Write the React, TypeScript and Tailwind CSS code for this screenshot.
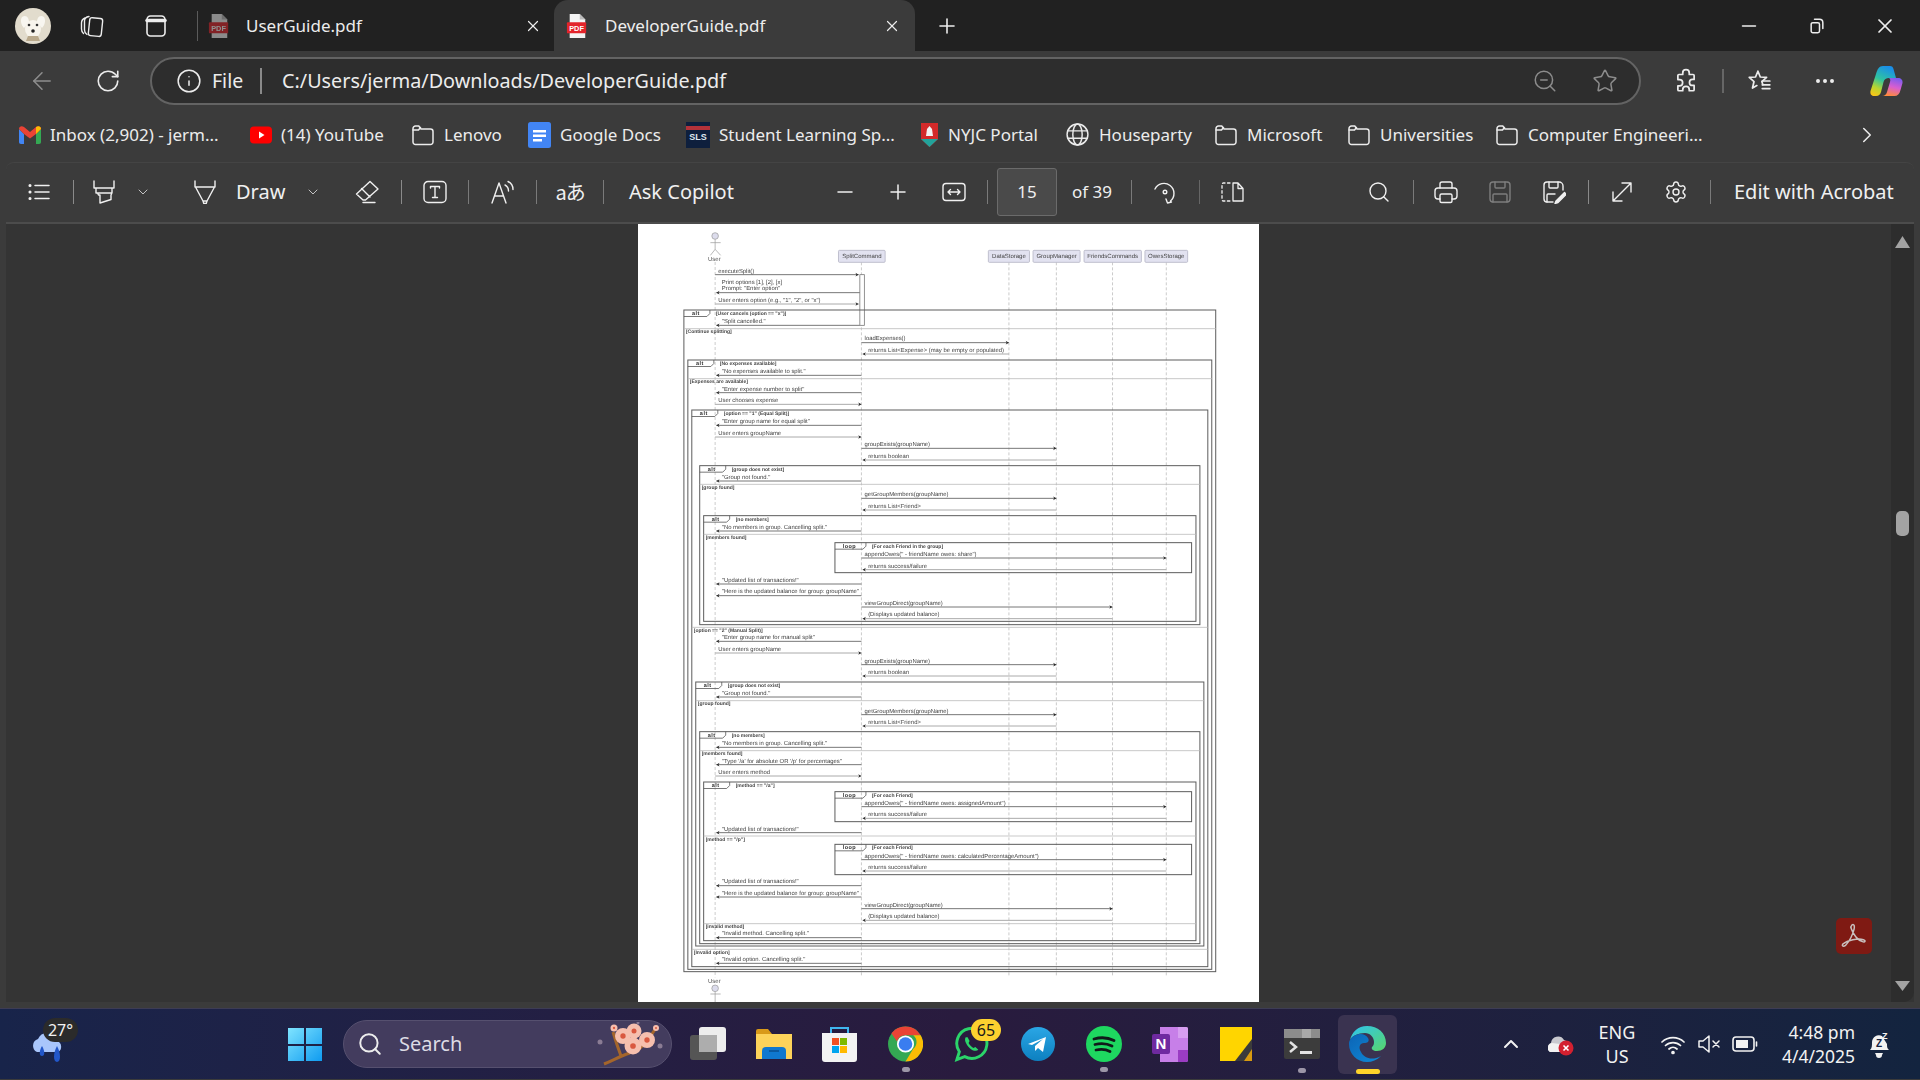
import React from "react";
import { Search, Settings, Plus, Minus, X, ChevronRight, ChevronDown, ChevronUp, Info, RotateCw, ArrowLeft, Star, ZoomOut, Ellipsis } from "lucide-react";

const S = ({ children, className = "", vb = "0 0 24 24", sw = 1.5 }: { children: React.ReactNode; className?: string; vb?: string; sw?: number }) => (
  <svg viewBox={vb} fill="none" stroke="currentColor" strokeWidth={sw} strokeLinecap="round" strokeLinejoin="round" className={"shrink-0 " + className}>{children}</svg>
);
const Div = ({ className = "" }: { className?: string }) => <div className={"w-px h-[24px] bg-[#7a7a7a] shrink-0 " + className} />;

const Folder = ({ className = "" }: { className?: string }) => (
  <S className={"w-[24px] h-[24px] text-[#ececec] " + className}><path d="M2 5.5A2.5 2.5 0 0 1 4.5 3h3.3l2.2 3h9.5A2.5 2.5 0 0 1 22 8.500V19a2.500 2.500 0 0 1-2.500 2.500h-15A2.500 2.500 0 0 1 2 19Z" /><path d="M2 7h5.500l2-2.500" /></S>
);
const PdfIcon = ({ dim = false, className = "" }: { dim?: boolean; className?: string }) => (
  <svg viewBox="0 0 24 26" className={"w-[22px] h-[24px] shrink-0 " + (dim ? "opacity-50 " : "") + className}>
    <path d="M4 0h11l6 6v20H4Z" fill="#f4f4f4" /><path d="M15 0v6h6Z" fill="#bbb" />
    <rect x="1" y="9" width="21" height="12" rx="1" fill="#e3242b" />
    <text x="11.500" y="18.500" textAnchor="middle" fill="#fff" fontSize="8" fontWeight="700" fontFamily="'Liberation Sans',sans-serif">PDF</text>
  </svg>
);
const Copilot = () => (
  <svg viewBox="0 0 33 30" className="w-[33px] h-[30px] ml-[33px] mt-[9px] shrink-0">
    <defs>
      <linearGradient id="cpa" x1="0.6" y1="0" x2="0.2" y2="1"><stop offset="0" stopColor="#1a8fe8" /><stop offset=".45" stopColor="#2fc4a0" /><stop offset=".75" stopColor="#b8d430" /><stop offset="1" stopColor="#f7c518" /></linearGradient>
      <linearGradient id="cpb" x1="0.7" y1="0" x2="0.4" y2="1"><stop offset="0" stopColor="#7a5cf0" /><stop offset=".5" stopColor="#d85ed0" /><stop offset="1" stopColor="#ff8a3d" /></linearGradient>
    </defs>
    <path d="M19 12h9c3 0 5 2 4.500 5l-2 7c-1 4-3 6-6 6H12c3 0 4.500-2 5-4l3-10c.5-2 .5-3-1-4Z" fill="url(#cpb)" />
    <path d="M13 0h7c2 0 3 1 3.500 3L26 12h-7c-3 0-4.500 1-5.500 4L11 26c-.5 2-2 4-5 4H4c-3 0-4-2.500-3.500-5L6 8C7.500 3 9 0 13 0Z" fill="url(#cpa)" />
  </svg>
);

const TabBar = () => (
  <div className="flex items-center h-[51px] bg-[#212121] text-[#ededed] shrink-0">
    <svg viewBox="0 0 36 36" className="w-[36px] h-[36px] ml-[15px] shrink-0">
      <circle cx="18" cy="18" r="18" fill="#e2dccd" /><path d="M7 9c5-3 7 2 7 5l-5 6c-3-3-4-8-2-11ZM29 9c-5-3-7 2-7 5l5 6c3-3 4-8 2-11Z" fill="#f8f6f0" />
      <ellipse cx="18" cy="21" rx="8" ry="9" fill="#f7f4ec" /><circle cx="14" cy="17" r="1.300" fill="#333" /><circle cx="22" cy="17" r="1.300" fill="#333" /><circle cx="18" cy="23" r="1.800" fill="#222" /><path d="M11 33h14l-2-5H13Z" fill="#b9a98c" />
    </svg>
    <S className="w-[24px] h-[24px] ml-[29px]" sw={1.4}><rect x="9" y="4" width="13" height="18" rx="2.500" transform="rotate(6 15 13)" /><path d="M9 2.500 C5.500 3 4.500 4.500 4.500 7v9c0 2 .8 3.500 2.500 4.500" /><path d="M5 4C2.500 5 1.500 6.500 1.500 9v6c0 2 .8 3.500 2 4.500" /></S>
    <S className="w-[24px] h-[24px] ml-[40px]" sw={1.6}><rect x="3" y="2" width="18" height="20" rx="3.500" /><path d="M3 6.500h18" strokeWidth="3.500" /></S>
    <div className="w-px h-[30px] bg-[#5b5b5b] ml-[29px]" />
    <div className="flex items-center w-[356px] h-[51px] pl-[10px] shrink-0">
      <PdfIcon dim />
      <span className="ml-[16px] text-[17px] text-[#ececec] w-[278px]">UserGuide.pdf</span>
      <X className="w-[18px] h-[18px]" strokeWidth={1.6} />
    </div>
    <div className="flex items-center w-[361px] h-[51px] bg-[#3b3b3b] rounded-t-[14px] pl-[12px] shrink-0">
      <PdfIcon />
      <span className="ml-[17px] text-[17px] w-[278px]">DeveloperGuide.pdf</span>
      <X className="w-[18px] h-[18px]" strokeWidth={1.6} />
    </div>
    <Plus className="w-[24px] h-[24px] ml-[20px]" strokeWidth={1.6} />
    <Minus className="w-[22px] h-[22px] ml-auto" strokeWidth={1.8} />
    <S className="w-[20px] h-[20px] ml-[47px]" sw={1.8}><rect x="5" y="8" width="10" height="12" rx="2" /><path d="M9 4h6a4 4 0 0 1 4 4v7" /></S>
    <X className="w-[24px] h-[24px] ml-[46px] mr-[23px]" strokeWidth={1.7} />
  </div>
);

const AddressBar = () => (
  <div className="flex items-start h-[64px] pt-[6px] bg-[#3b3b3b] text-[#ececec] shrink-0">
    <ArrowLeft className="w-[28px] h-[28px] ml-[28px] mt-[10px] text-[#8e8e8e]" strokeWidth={1.3} />
    <RotateCw className="w-[26px] h-[26px] ml-[39px] mt-[11px]" strokeWidth={1.5} />
    <div className="flex items-center w-[1491px] h-[48px] ml-[29px] rounded-full bg-[#2d2d2d] border-2 border-[#636363] shrink-0">
      <Info className="w-[26px] h-[26px] ml-[24px]" strokeWidth={1.4} />
      <span className="ml-[10px] text-[19.500px] w-[42px]">File</span>
      <div className="w-[2px] h-[26px] bg-[#8a8a8a] ml-[6px]" />
      <span className="ml-[20px] text-[19.800px] whitespace-nowrap w-[460px]">C:/Users/jerma/Downloads/DeveloperGuide.pdf</span>
      <ZoomOut className="w-[26px] h-[26px] ml-[790px] text-[#8c8c8c]" strokeWidth={1.4} />
      <Star className="w-[26px] h-[26px] ml-[34px] text-[#8c8c8c]" strokeWidth={1.4} />
    </div>
    <S className="w-[26px] h-[26px] ml-[32px] mt-[11px]" sw={1.6}><path d="M9 4.500a3 3 0 0 1 6 0V6h3.500a1 1 0 0 1 1 1v3.500H18a2.800 2.800 0 0 0 0 5.600h1.500V20a1 1 0 0 1-1 1h-3.500v-1a3 3 0 0 0-6 0v1H5.500a1 1 0 0 1-1-1v-3.500H6a2.900 2.900 0 0 0 0-5.800H4.500V7a1 1 0 0 1 1-1H9Z" /></S>
    <div className="w-[2px] h-[24px] bg-[#666] ml-[23px] mt-[12px]" />
    <S className="w-[26px] h-[26px] ml-[22px] mt-[11px]" sw={1.6}><path d="M11 3l2.200 5.300 5.800.4-4.400 3.800 1 3M11 3 8.800 8.300 3 8.700l4.400 3.800L6 18.500l4-2.300" /><path d="M15 12h7M15 15.500h7M15 19h7" /></S>
    <Ellipsis className="w-[24px] h-[24px] ml-[41px] mt-[12px]" strokeWidth={2} />
    <Copilot />
  </div>
);

const GIcon = () => (
  <svg viewBox="0 0 22 18" className="w-[22px] h-[18px] shrink-0"><path d="M0 3v13c0 1 .7 2 2 2h3V8Z" fill="#4285f4" /><path d="M22 3v13c0 1-.7 2-2 2h-3V8Z" fill="#34a853" /><path d="M0 3c0-3 3-3.500 5-2l6 5 6-5c2-1.500 5-1 5 2l-5 5-6 4.500L5 8Z" fill="#ea4335" /><path d="M17 1c2-1.500 5-1 5 2l-5 5Z" fill="#fbbc04" /></svg>
);
const Bookmark = ({ icon, text, className }: { icon: React.ReactNode; text: string; className: string }) => (
  <div className={"flex items-center shrink-0 " + className}>
    {icon}
    <span className="whitespace-nowrap text-[17px] text-[#ececec] ml-[9px]">{text}</span>
  </div>
);
const Bookmarks = () => (
  <div className="flex items-center h-[39px] bg-[#3b3b3b] text-[#ececec] shrink-0 mb-[8px]">
    <Bookmark className="ml-[19px] w-[231px]" text="Inbox (2,902) - jerm..." icon={<GIcon />} />
    <Bookmark className="w-[161px]" text="(14) YouTube" icon={<svg viewBox="0 0 22 18" className="w-[22px] h-[18px] shrink-0"><rect width="22" height="17" y=".5" rx="4" fill="#f00" /><path d="M9 5.500v7l5.500-3.500Z" fill="#fff" /></svg>} />
    <Bookmark className="w-[117px]" text="Lenovo" icon={<Folder />} />
    <Bookmark className="w-[158px]" text="Google Docs" icon={<svg viewBox="0 0 23 26" className="w-[23px] h-[26px] shrink-0"><rect width="23" height="26" rx="2.500" fill="#4285f4" /><path d="M5 8h13v2.500H5ZM5 12.500h13V15H5ZM5 17h9v2.500H5Z" fill="#fff" /></svg>} />
    <Bookmark className="w-[234px]" text="Student Learning Sp..." icon={<svg viewBox="0 0 24 26" className="w-[24px] h-[26px] shrink-0"><rect width="24" height="26" fill="#0e1f3d" /><rect y="4" width="24" height="4" fill="#b3323a" /><text x="12" y="18" textAnchor="middle" fontSize="9" fontWeight="700" fill="#dfe6ee" fontFamily="'Liberation Sans',sans-serif">SLS</text></svg>} />
    <Bookmark className="w-[145px]" text="NYJC Portal" icon={<svg viewBox="0 0 19 26" className="w-[19px] h-[26px] shrink-0"><path d="M1 1h17v16l-8.500 8L1 17Z" fill="#d32a2a" /><path d="M6 14l1-7 2.500-3L12 7l1 7Z" fill="#f3f3f3" /><path d="M1 17h17l-8.500 8Z" fill="#22a39b" /></svg>} />
    <Bookmark className="w-[149px]" text="Houseparty" icon={<S className="w-[25px] h-[25px]" sw={1.4}><circle cx="12" cy="12" r="10" /><ellipse cx="12" cy="12" rx="4.500" ry="10" /><path d="M2.500 8.500h19M2.500 15.500h19" /></S>} />
    <Bookmark className="w-[133px]" text="Microsoft" icon={<Folder />} />
    <Bookmark className="w-[148px]" text="Universities" icon={<Folder />} />
    <Bookmark className="w-[220px]" text="Computer Engineeri..." icon={<Folder />} />
    <ChevronRight className="w-[26px] h-[26px] ml-[139px]" strokeWidth={1.4} />
  </div>
);

const Toolbar = () => (
  <div className="flex items-center h-[62px] pb-[2px] mx-[6px] bg-[#3b3b3b] rounded-t-[8px] border-b-2 border-[#4c4c4c] border-t border-t-[#444] text-[#f0f0f0] shrink-0">
    <S className="w-[24px] h-[24px] ml-[21px]" sw={1.5}><path d="M8 5.500h14M8 12h14M8 18.500h14" /><circle cx="3" cy="5.500" r=".8" /><circle cx="3" cy="12" r=".8" /><circle cx="3" cy="18.500" r=".8" /></S>
    <Div className="ml-[22px] bg-[#8a8a8a]" />
    <S className="w-[24px] h-[24px] ml-[18px]" sw={1.4}><path d="M2 1v7h20V1M4 8v5h16V8M5.500 13l1 2h1.500v8l11-3.500V15l1-2" /></S>
    <ChevronDown className="w-[16px] h-[16px] ml-[19px] text-[#cfcfcf]" strokeWidth={1.4} />
    <S className="w-[24px] h-[24px] ml-[42px]" sw={1.4}><path d="M2 1v6h20V1M2.500 7 10 21h4l7.500-14M10 21l.8 2.500h2.400L14 21" /></S>
    <span className="text-[20px] ml-[19px] w-[48px]">Draw</span>
    <ChevronDown className="w-[16px] h-[16px] ml-[21px] text-[#cfcfcf]" strokeWidth={1.4} />
    <S className="w-[24px] h-[24px] ml-[34px]" sw={1.4}><path d="M15 1.500 23 9 10.500 20H8L1.500 14ZM6.500 8.500 15 17M8 22.500h12" /></S>
    <Div className="ml-[22px] bg-[#8a8a8a]" />
    <S className="w-[24px] h-[24px] ml-[21px]" sw={1.4}><rect x="1" y="1.500" width="22" height="21" rx="4" /><path d="M7.500 6.500h9M7.500 6.500v1.500M16.500 6.500v1.500M12 6.500v11M9.500 17.500h5" /></S>
    <Div className="ml-[21px]" />
    <S className="w-[24px] h-[24px] ml-[21px]" sw={1.4}><path d="M2 23 9 3l7 20M4.500 16h9M15 5c2 1 3.500 3 3.500 6M18 1.500c3 1.500 5 4.500 5 8" /></S>
    <Div className="ml-[22px]" />
    <span className="ml-[21px] w-[24px] text-[20px] leading-none whitespace-nowrap font-['Noto_Sans_CJK_JP',sans-serif] flex justify-center tracking-[-1px]">aあ</span>
    <Div className="ml-[21px]" />
    <span className="text-[20px] ml-[25px] w-[106px] whitespace-nowrap">Ask Copilot</span>
    <Minus className="w-[24px] h-[24px] ml-[98px]" strokeWidth={1.5} />
    <Plus className="w-[24px] h-[24px] ml-[29px]" strokeWidth={1.5} />
    <S className="w-[24px] h-[24px] ml-[32px]" sw={1.4}><rect x="1" y="3.500" width="22" height="17" rx="3" /><path d="M6 12h12M8.500 9.500 6 12l2.500 2.500M15.500 9.500 18 12l-2.500 2.500" /></S>
    <Div className="ml-[21px]" />
    <div className="w-[60px] h-[48px] ml-[9px] bg-[#4a4a4a] border border-[#6b6b6b] rounded-[3px] flex items-center justify-center text-[17px] shrink-0">15</div>
    <span className="text-[17px] ml-[15px] w-[41px] whitespace-nowrap">of 39</span>
    <Div className="ml-[18px]" />
    <S className="w-[24px] h-[24px] ml-[21px]" sw={1.4}><path d="M2 9a10 10 0 1 1 15.500 12M13 19l1.500 4 4-1" /><circle cx="12" cy="12" r="1.800" /></S>
    <Div className="ml-[22px] bg-[#666]" />
    <S className="w-[24px] h-[24px] ml-[20px]" sw={1.3}><path d="M10 3H3a1.500 1.500 0 0 0-1 1.500v15A1.500 1.500 0 0 0 3 21h7" strokeDasharray="2.500 2.500" /><path d="M13 3h5l5 5.500V21H13ZM18 3v5.500h5" /></S>
    <Search className="w-[24px] h-[24px] ml-[123px]" strokeWidth={1.4} />
    <Div className="ml-[22px]" />
    <S className="w-[24px] h-[24px] ml-[20px]" sw={1.4}><path d="M6 8V4a2 2 0 0 1 2-2h8a2 2 0 0 1 2 2v4" /><path d="M6 19H4a3 3 0 0 1-3-3v-5a3 3 0 0 1 3-3h16a3 3 0 0 1 3 3v5a3 3 0 0 1-3 3h-2" /><rect x="6" y="14" width="12" height="8.500" rx="1.500" /></S>
    <S className="w-[24px] h-[24px] ml-[30px] text-[#7e7e7e]" sw={1.4}><path d="M5 2h14a3 3 0 0 1 3 3v14a3 3 0 0 1-3 3H5a3 3 0 0 1-3-3V5a3 3 0 0 1 3-3Z" /><path d="M7 2v5a1 1 0 0 0 1 1h8a1 1 0 0 0 1-1V2M5 22v-7a1 1 0 0 1 1-1h12a1 1 0 0 1 1 1v7" /></S>
    <S className="w-[24px] h-[24px] ml-[30px]" sw={1.4}><path d="M11 22H5a3 3 0 0 1-3-3V5a3 3 0 0 1 3-3h12a4 4 0 0 1 4 4v4" /><path d="M7 2v5a1 1 0 0 0 1 1h7a1 1 0 0 0 1-1V2M5 22v-7a1 1 0 0 1 1-1h7" /><path d="M22.500 12.500 14 21l-1 2.500 3-1 8-8Z" fill="currentColor" /></S>
    <Div className="ml-[22px] bg-[#8a8a8a]" />
    <S className="w-[24px] h-[24px] ml-[21px]" sw={1.4}><path d="M3 21 21 3M12 3h9v9M3 12v9h9" /></S>
    <Settings className="w-[24px] h-[24px] ml-[30px]" strokeWidth={1.4} />
    <Div className="ml-[22px]" />
    <span className="text-[20px] ml-[23px] whitespace-nowrap">Edit with Acrobat</span>
  </div>
);

/* sequence diagram data: coordinates are measured, then mapped to page pixels */
const fx = (z: number) => 2 + z / 2.529;
const A = (z: number) => z / 3 - 2;
const B = (z: number) => z / 3 + 286;
const C = (z: number) => z / 3 + 556;
const U = 190, SP = 560, DS = 933, GM = 1053, FC = 1195, OS = 1331;
type Msg = { y: number; ly: number; from: number; to: number; t: string; d?: boolean };
const m = (f: (n: number) => number, l: number, ty: number, from: number, to: number, t: string, d = false): Msg => ({ y: f(l), ly: f(ty + 5), from, to, t, d });
const msgs: Msg[] = [
  m(A, 158, 148, U, 553, "executeSplit()"),
  m(A, 212, 200, 556, U, 'Prompt: "Enter option"'),
  m(A, 246, 235, U, 553, 'User enters option (e.g., "1", "2", or "x")', true),
  m(A, 310, 298, 556, U, '"Split cancelled."'),
  m(A, 362, 350, SP, DS, "loadExpenses()"),
  m(A, 396, 385, DS, SP, "returns List<Expense> (may be empty or populated)", true),
  m(A, 460, 448, SP, U, '"No expenses available to split."'),
  m(A, 512, 501, SP, U, '"Enter expense number to split"'),
  m(A, 547, 536, U, SP, "User chooses expense", true),
  m(A, 610, 599, SP, U, '"Enter group name for equal split"'),
  m(A, 645, 633, U, SP, "User enters groupName", true),
  m(A, 679, 668, SP, GM, "groupExists(groupName)"),
  m(A, 714, 702, GM, SP, "returns boolean", true),
  m(A, 777, 765, SP, U, '"Group not found."'),
  m(A, 829, 818, SP, GM, "getGroupMembers(groupName)"),
  m(A, 864, 852, GM, SP, "returns List<Friend>", true),
  m(B, 63, 52, SP, U, '"No members in group. Cancelling split."'),
  m(B, 144, 133, SP, OS, 'appendOwes(" - friendName owes: share")'),
  m(B, 179, 168, OS, SP, "returns success/failure", true),
  m(B, 222, 211, SP, U, '"Updated list of transactions!"'),
  m(B, 257, 245, SP, U, '"Here is the updated balance for group: groupName"'),
  m(B, 291, 280, SP, FC, "viewGroupDirect(groupName)"),
  m(B, 326, 314, FC, SP, "(Displays updated balance)", true),
  m(B, 394, 383, SP, U, '"Enter group name for manual split"'),
  m(B, 429, 418, U, SP, "User enters groupName", true),
  m(B, 464, 453, SP, GM, "groupExists(groupName)"),
  m(B, 498, 487, GM, SP, "returns boolean", true),
  m(B, 561, 550, SP, U, '"Group not found."'),
  m(B, 614, 603, SP, GM, "getGroupMembers(groupName)"),
  m(B, 648, 637, GM, SP, "returns List<Friend>", true),
  m(B, 712, 700, SP, U, '"No members in group. Cancelling split."'),
  m(B, 764, 753, SP, U, "\"Type '/a' for absolute OR '/p' for percentages\""),
  m(B, 798, 787, U, SP, "User enters method", true),
  m(C, 80, 69, SP, OS, 'appendOwes(" - friendName owes: assignedAmount")'),
  m(C, 115, 104, OS, SP, "returns success/failure", true),
  m(C, 158, 147, SP, U, '"Updated list of transactions!"'),
  m(C, 239, 228, SP, OS, 'appendOwes(" - friendName owes: calculatedPercentageAmount")'),
  m(C, 273, 262, OS, SP, "returns success/failure", true),
  m(C, 317, 305, SP, U, '"Updated list of transactions!"'),
  m(C, 351, 340, SP, U, '"Here is the updated balance for group: groupName"'),
  m(C, 386, 375, SP, FC, "viewGroupDirect(groupName)"),
  m(C, 421, 410, FC, SP, "(Displays updated balance)", true),
  m(C, 473, 461, SP, U, '"Invalid method. Cancelling split."'),
  m(C, 550, 539, SP, U, '"Invalid option. Cancelling split."'),
];
type Fr = { x1: number; x2: number; y1: number; y2: number; tag: string; c: string };
const frames: Fr[] = [
  { x1: 111, x2: 1456, y1: A(264), y2: C(575), tag: "alt", c: '[User cancels (option == "x")]' },
  { x1: 121, x2: 1446, y1: A(414), y2: C(568), tag: "alt", c: "[No expenses available]" },
  { x1: 131, x2: 1436, y1: A(564), y2: C(560), tag: "alt", c: '[option == "1" (Equal Split)]' },
  { x1: 151, x2: 1416, y1: A(731), y2: B(344), tag: "alt", c: "[group does not exist]" },
  { x1: 161, x2: 1406, y1: B(17), y2: B(334), tag: "alt", c: "[no members]" },
  { x1: 493, x2: 1395, y1: B(98), y2: B(188), tag: "loop", c: "[For each Friend in the group]" },
  { x1: 141, x2: 1426, y1: B(516), y2: C(498), tag: "alt", c: "[group does not exist]" },
  { x1: 151, x2: 1416, y1: B(665), y2: C(491), tag: "alt", c: "[no members]" },
  { x1: 161, x2: 1406, y1: B(816), y2: C(482), tag: "alt", c: '[method == "/a"]' },
  { x1: 493, x2: 1395, y1: C(35), y2: C(125), tag: "loop", c: "[For each Friend]" },
  { x1: 493, x2: 1395, y1: C(193), y2: C(284), tag: "loop", c: "[For each Friend]" },
];
const seps: { x1: number; x2: number; y: number; t: string }[] = [
  { x1: 111, x2: 1456, y: A(320), t: "[Continue splitting]" },
  { x1: 121, x2: 1446, y: A(470), t: "[Expenses are available]" },
  { x1: 151, x2: 1416, y: A(787), t: "[group found]" },
  { x1: 161, x2: 1406, y: B(73), t: "[members found]" },
  { x1: 131, x2: 1436, y: B(352), t: '[option == "2" (Manual Split)]' },
  { x1: 141, x2: 1426, y: B(572), t: "[group found]" },
  { x1: 151, x2: 1416, y: B(722), t: "[members found]" },
  { x1: 161, x2: 1406, y: C(168), t: '[method == "/p"]' },
  { x1: 161, x2: 1406, y: C(431), t: "[invalid method]" },
  { x1: 131, x2: 1436, y: C(508), t: "[Invalid option]" },
];
const actors = [
  { a: 502, b: 620, t: "SplitCommand" },
  { a: 881, b: 985, t: "DataStorage" },
  { a: 994, b: 1113, t: "GroupManager" },
  { a: 1123, b: 1268, t: "FriendsCommands" },
  { a: 1277, b: 1385, t: "OwesStorage" },
];

const Diagram = () => (
  <svg viewBox="0 0 621 778" className="w-[621px] h-[778px] blur-[0.25px]" fontFamily="'Liberation Sans',sans-serif" fontSize="6" textRendering="geometricPrecision">
    {[U, SP, DS, GM, FC, OS].map((l) => (
      <line key={l} x1={fx(l)} x2={fx(l)} y1={l === U ? A(120) : A(121)} y2={C(592)} stroke="#b5b5b5" strokeWidth=".7" strokeDasharray="3 2" />
    ))}
    {actors.map((a) => (
      <g key={a.t}>
        <rect x={fx(a.a)} y={A(85)} width={(a.b - a.a) / 2.529} height="12" rx="1" fill="#e2e2f0" stroke="#b4b4c4" strokeWidth=".8" />
        <text x={fx((a.a + a.b) / 2)} y={A(109)} textAnchor="middle" fill="#444">{a.t}</text>
      </g>
    ))}
    <g stroke="#9a9a9a" strokeWidth=".7" fill="none">
      <circle cx={fx(U)} cy={A(42)} r="3.300" fill="#dcdcec" />
      <path d={`M${fx(U)} ${A(52)}V${A(82)}M${fx(178)} ${A(62)}H${fx(204)}M${fx(178)} ${A(100)}L${fx(U)} ${A(82)}L${fx(204)} ${A(100)}`} />
      <circle cx={fx(U)} cy={C(625)} r="3.300" fill="#dcdcec" />
      <path d={`M${fx(U)} ${C(635)}V${C(670)}M${fx(178)} ${C(642)}H${fx(204)}`} />
    </g>
    <text x={fx(188)} y={A(116)} textAnchor="middle" fill="#555">User</text>
    <text x={fx(188)} y={C(609)} textAnchor="middle" fill="#555">User</text>
    <rect x={fx(556)} y={A(158)} width="4.500" height={(310 - 158) / 3} fill="#fff" stroke="#777" strokeWidth=".8" />
    {frames.map((f, i) => {
      const tw = f.tag === "loop" ? 31 : 26;
      const x = fx(f.x1);
      const y = f.y1;
      return (
        <g key={i}>
          <rect x={x} y={y} width={(f.x2 - f.x1) / 2.529} height={f.y2 - f.y1} fill="none" stroke="#5c5c5c" strokeWidth="1" />
          <path d={`M${x} ${y + 6.500}H${x + tw - 3}L${x + tw} ${y + 3.500}V${y}`} fill="none" stroke="#555" strokeWidth=".8" />
          <text x={x + tw / 2 - 1} y={y + 5} textAnchor="middle" fontWeight="700" fontSize="5.500" fill="#333" letterSpacing=".5">{f.tag}</text>
          <text x={x + tw + 6} y={y + 5} fontWeight="700" fontSize="5" fill="#444">{f.c}</text>
        </g>
      );
    })}
    {seps.map((s, i) => (
      <g key={i}>
        <line x1={fx(s.x1)} x2={fx(s.x2)} y1={s.y} y2={s.y} stroke="#bbb" strokeWidth=".8" />
        <text x={fx(s.x1) + 2} y={s.y + 4.500} fontWeight="700" fontSize="5" fill="#444">{s.t}</text>
      </g>
    ))}
    {msgs.map((g, i) => {
      const right = g.to > g.from;
      const x1 = fx(g.from);
      const x2 = right ? fx(g.to) : fx(g.to + 3);
      const lx = right ? fx(g.from + 8) : fx(g.to + 17);
      const h = right ? 3.200 : -3.200;
      return (
        <g key={i}>
          <line x1={x1} x2={x2} y1={g.y} y2={g.y} stroke={g.d ? "#aaa" : "#777"} strokeWidth="1" />
          <path d={`M${x2} ${g.y}L${x2 - h} ${g.y - 1.800}L${x2 - h * 0.7} ${g.y}L${x2 - h} ${g.y + 1.800}Z`} fill="#2a2a2a" />
          <text x={lx} y={g.ly} fill="#3f3f3f" fontSize="5.900">{g.t}</text>
        </g>
      );
    })}
    <text x={fx(207)} y={A(187)} fill="#3f3f3f" fontSize="5.900">Print options [1], [2], [x]</text>
  </svg>
);

const Viewer = () => (
  <div className="flex h-[778px] mx-[6px] bg-[#343434] shrink-0">
    <div className="relative flex-1 flex justify-center overflow-hidden">
      <div className="w-[621px] h-[778px] bg-white shrink-0"><Diagram /></div>
      <div className="absolute right-[19px] bottom-[48px] w-[36px] h-[36px] rounded-[5px] bg-[#7f1a13] flex items-center justify-center">
        <svg viewBox="0 0 30 30" className="w-[28px] h-[28px]" fill="none" stroke="#c9c0be" strokeWidth="1.600"><path d="M13 3c2-1 3 1 2 5-1 5-5 13-9 17-3 2-5 0-2-2 4-3 15-6 21-4 3 1 2 3-1 2-5-1-10-8-12-14-1-2 0-3 1-4Z" /></svg>
      </div>
    </div>
    <div className="w-[23px] bg-[#2d2d2d] rounded-br-[10px] flex flex-col items-center shrink-0">
      <svg viewBox="0 0 15 12" className="w-[15px] h-[12px] mt-[12px] shrink-0"><path d="M7.500 0 15 12H0Z" fill="#a3a3a3" /></svg>
      <div className="w-[13px] h-[25px] rounded-[5px] bg-[#a3a3a3] mt-[263px] shrink-0" />
      <svg viewBox="0 0 15 10" className="w-[15px] h-[10px] mt-[445px] shrink-0"><path d="M0 0h15L7.500 10Z" fill="#a3a3a3" /></svg>
    </div>
  </div>
);

const Dot = () => <div className="absolute left-1/2 -translate-x-1/2 bottom-[-10px] w-[8px] h-[5px] rounded-full bg-[#9c96a8]" />;

const Flower = () => (
  <svg viewBox="0 0 68 44" className="w-[68px] h-[44px] ml-auto mr-[7px] shrink-0">
    <path d="M8 42C18 38 24 34 34 31M25 34c-3-8-5-14-8-24M36 30c8-2 12-6 24-24" stroke="#a4652b" strokeWidth="3" fill="none" />
    {[[27, 14, 8], [38, 9, 7.500], [37, 24, 8.500], [51, 18, 8], [18, 6, 3.500], [60, 6, 3]].map(([x, y, r], i) => (
      <g key={i}><circle cx={x} cy={y} r={r} fill="#f6bfae" /><circle cx={x} cy={y} r={r / 3} fill="#d9583f" /></g>
    ))}
    <circle cx="64" cy="24" r="2.500" fill="#8a7c94" /><circle cx="4" cy="20" r="2.500" fill="#8a7c94" /><circle cx="42" cy="1" r="1.500" fill="#8a7c94" />
  </svg>
);

const Taskbar = () => (
  <div className="flex items-center h-[71px] bg-linear-to-r from-[#18244a] via-[#291b3e] to-[#13243f] border-t border-[#3d3c55] text-[#f2f2f2] shrink-0">
    <div className="relative w-[37px] h-[34px] ml-[29px] mt-[6px] shrink-0">
      <svg viewBox="0 0 37 34" className="w-[37px] h-[34px]"><path d="M8 22a7 7 0 0 1 1-13 10 10 0 0 1 19 2 6 6 0 0 1 1 11Z" fill="#a9c6fb" /><path d="M13 16c3 5 3 10 0 10s-3-5 0-10ZM28 16c4 7 4 16 0 16s-4-9 0-16Z" fill="#2257c9" /></svg>
      <div className="absolute left-[14px] top-[-12px] w-[35px] h-[24px] rounded-full bg-[#2b2b2b] text-[16px] leading-[24px] text-center">27°</div>
    </div>
    <svg viewBox="0 0 34 34" className="w-[34px] h-[34px] ml-[222px] shrink-0">
      <defs><linearGradient id="winl" x1="0" y1="0" x2="1" y2="1"><stop offset="0" stopColor="#7fe4ff" /><stop offset="1" stopColor="#0f9bf0" /></linearGradient></defs>
      <path d="M0 1h16v16H0ZM18 1h16v16H18ZM0 19h16v15H0ZM18 19h16v15H18Z" fill="url(#winl)" />
    </svg>
    <div className="flex items-center w-[329px] h-[48px] ml-[21px] rounded-full bg-[#433c5e] border border-[#56506f] shrink-0">
      <Search className="w-[26px] h-[26px] ml-[13px] text-[#ededed]" strokeWidth={1.8} />
      <span className="ml-[16px] text-[20px] text-[#dddbe4]">Search</span>
      <Flower />
    </div>
    <svg viewBox="0 0 37 36" className="w-[37px] h-[36px] ml-[18px] shrink-0"><rect y="9" width="27" height="25" rx="3" fill="#555" /><rect x="9" y="1" width="27" height="25" rx="3" fill="#ededed" /><rect x="9" y="9" width="18" height="17" fill="#adadad" /></svg>
    <svg viewBox="0 0 36 34" className="w-[36px] h-[34px] ml-[29px] shrink-0"><path d="M0 4a2 2 0 0 1 2-2h10l4 5h18a2 2 0 0 1 2 2v23H0Z" fill="#d99a19" /><path d="M0 7h36v25H0Z" fill="#fdd35a" /><path d="M6 32v-8a4 4 0 0 1 4-4h16a4 4 0 0 1 4 4v8Z" fill="#0f78cf" /><path d="M13 24h10" stroke="#0a4f8f" strokeWidth="1.500" /></svg>
    <svg viewBox="0 0 35 36" className="w-[35px] h-[36px] ml-[30px] shrink-0"><path d="M9 7V2h17v5" stroke="#3fb5ee" strokeWidth="2" fill="none" /><path d="M0 7h35v26a3 3 0 0 1-3 3H3a3 3 0 0 1-3-3Z" fill="#f3f3f3" /><rect x="10" y="12" width="7" height="7" fill="#f25022" /><rect x="18" y="12" width="7" height="7" fill="#7fba00" /><rect x="10" y="20" width="7" height="7" fill="#00a4ef" /><rect x="18" y="20" width="7" height="7" fill="#ffb900" /></svg>
    <div className="relative w-[35px] h-[36px] ml-[31px] shrink-0">
      <svg viewBox="0 0 36 36" className="w-[35px] h-[36px]"><circle cx="18" cy="18" r="18" fill="#34a853" /><path d="M18 0a18 18 0 0 1 15.600 9H18a9 9 0 0 0-8.700 6.500L3.500 7A18 18 0 0 1 18 0Z" fill="#ea4335" /><path d="M33.600 9A18 18 0 0 1 18 36l8-13a9 9 0 0 0 0-14Z" fill="#fbbc04" /><circle cx="18" cy="18" r="8.800" fill="#fff" /><circle cx="18" cy="18" r="7" fill="#3a7df0" /></svg>
      <Dot />
    </div>
    <div className="relative w-[35px] h-[36px] ml-[31px] shrink-0">
      <svg viewBox="0 0 36 36" className="w-[35px] h-[36px]" fill="none" stroke="#2bd46a" strokeWidth="3"><path d="M3 34l2.500-8A15.500 15.500 0 1 1 11 31Z" /><path d="M12 11c-2 3 1 8 4 11s7 4 9 2l-3-3-2 1c-2-1-4-3-5-5l1-2-2-4Z" fill="#2bd46a" stroke="none" /></svg>
      <div className="absolute left-[17px] top-[-7px] w-[30px] h-[22px] rounded-full bg-[#fdd22f] text-[#1a1a1a] text-[16px] leading-[22px] text-center">65</div>
    </div>
    <svg viewBox="0 0 34 34" className="w-[34px] h-[34px] ml-[32px] shrink-0"><defs><linearGradient id="tg" x1="0" y1="0" x2="0" y2="1"><stop offset="0" stopColor="#2aa6e5" /><stop offset="1" stopColor="#0d80c0" /></linearGradient></defs><circle cx="17" cy="17" r="17" fill="url(#tg)" /><path d="M7 17 25 10l-3 15-5-4-3 3v-5l8-7-11 6Z" fill="#fff" /></svg>
    <div className="relative w-[36px] h-[36px] ml-[31px] shrink-0">
      <svg viewBox="0 0 36 36" className="w-[36px] h-[36px]"><circle cx="18" cy="18" r="18" fill="#1ed760" /><path d="M8 13c7-2 14-1.500 20 1.500M9 18.500c6-1.500 12-1 17 1.500M10 24c5-1 10-.7 14 1.500" stroke="#101a1a" strokeWidth="2.800" strokeLinecap="round" fill="none" /></svg>
      <Dot />
    </div>
    <svg viewBox="0 0 36 36" className="w-[36px] h-[36px] ml-[30px] shrink-0"><path d="M8 1h26a2 2 0 0 1 2 2v31a2 2 0 0 1-2 2H8Z" fill="#c77fe8" /><path d="M26 1h8a2 2 0 0 1 2 2v9H26Z" fill="#d79ef0" /><path d="M26 24h10v10a2 2 0 0 1-2 2h-8Z" fill="#9a3cc3" /><rect y="8" width="18" height="20" rx="2" fill="#6f2aa0" /><text x="9" y="23" textAnchor="middle" fontSize="15" fontWeight="700" fill="#fff" fontFamily="'Liberation Sans',sans-serif">N</text></svg>
    <svg viewBox="0 0 32 34" className="w-[32px] h-[34px] ml-[32px] shrink-0"><rect width="32" height="34" fill="#ffd500" /><path d="M32 12v22H15Z" fill="#3b3b3b" /><path d="M32 22v12H24Z" fill="#d89a10" /></svg>
    <div className="relative w-[36px] h-[30px] ml-[32px] shrink-0">
      <svg viewBox="0 0 36 30" className="w-[36px] h-[30px]"><rect width="36" height="30" rx="2" fill="#3c3c3c" /><rect width="36" height="9" fill="#8c8c8c" /><rect x="18" width="9" height="9" fill="#a8a8a8" /><path d="M6 13l6 5-6 5" stroke="#e3e3e3" strokeWidth="2.500" fill="none" /><rect x="16" y="22" width="12" height="3" fill="#e3e3e3" /></svg>
      <div className="absolute left-1/2 -translate-x-1/2 bottom-[-14px] w-[8px] h-[5px] rounded-full bg-[#9c96a8]" />
    </div>
    <div className="relative flex items-center justify-center w-[59px] h-[59px] ml-[18px] rounded-[6px] bg-[#3a3350] shrink-0">
      <svg viewBox="0 0 37 36" className="w-[37px] h-[36px]"><defs><linearGradient id="ed1" x1="0" y1="0" x2="1" y2="1"><stop offset="0" stopColor="#2fc4f0" /><stop offset="1" stopColor="#58d66b" /></linearGradient><linearGradient id="ed2" x1="0" y1="0" x2="1" y2="1"><stop offset="0" stopColor="#0c64b5" /><stop offset="1" stopColor="#0f8ad8" /></linearGradient></defs><path d="M18 0c11 0 19 7 19 17 0 5-4 8-9 8-4 0-6-2-5-4 1-1 2-2 2-5 0-5-4-9-9-9C9 7 3 10 1 14 3 6 9 0 18 0Z" fill="url(#ed1)" /><path d="M1 14c3-6 14-9 18-2 2 4-1 5-4 5-4 0-6 4-3 9 3 6 11 9 20 4-4 4-9 6-14 6C8 36 0 28 0 18c0-1 0-3 1-4Z" fill="url(#ed2)" /></svg>
      <div className="absolute bottom-[0px] left-[18px] w-[24px] h-[5px] rounded-full bg-[#ffd42a]" />
    </div>
    <ChevronUp className="w-[24px] h-[24px] ml-[102px]" strokeWidth={2} />
    <svg viewBox="0 0 26 24" className="w-[26px] h-[24px] ml-[25px] shrink-0"><path d="M2 20a5 5 0 0 1 1-9 7 7 0 0 1 13-3 6 6 0 0 1 4 6l-8 6Z" fill="#c9c9cf" /><path d="M2 20a5 5 0 0 1 2-9l8 1 5 8Z" fill="#f2f2f2" /><circle cx="18" cy="16" r="7.500" fill="#d32030" /><path d="M15.500 13.500l5 5M20.500 13.500l-5 5" stroke="#fff" strokeWidth="1.600" /></svg>
    <div className="w-[50px] ml-[18px] text-center text-[18px] leading-[24px] shrink-0"><div>ENG</div><div>US</div></div>
    <S className="w-[24px] h-[24px] ml-[19px]" sw={1.7}><path d="M1 10a16 16 0 0 1 22 0M4.500 13.500a11 11 0 0 1 15 0M8 17a6 6 0 0 1 8 0" /><circle cx="12" cy="20.500" r="1" fill="currentColor" /></S>
    <S className="w-[24px] h-[24px] ml-[12px]" sw={1.5}><path d="M2 9v6h4l6 5V4L6 9ZM16 9l6 6M22 9l-6 6" /></S>
    <S className="w-[26px] h-[24px] ml-[11px]" vb="0 0 26 24" sw={1.6}><rect x="1" y="5" width="21" height="14" rx="3" /><rect x="4" y="8" width="12" height="8" fill="currentColor" stroke="none" /><path d="M24.500 10v4" /></S>
    <div className="w-[90px] ml-[7px] text-right text-[17.500px] leading-[24px] whitespace-nowrap shrink-0 flex flex-col items-end"><div>4:48 pm</div><div>4/4/2025</div></div>
    <svg viewBox="0 0 24 28" className="w-[24px] h-[28px] ml-[12px] shrink-0"><path d="M3 20c2-2 2-4 2-8a7 7 0 0 1 10-6l5 8c0 3 0 4 2 6Z" fill="#f2f2f2" /><path d="M8 23h8l-1 2a3 3 0 0 1-6 0Z" fill="#f2f2f2" /><text x="9" y="17" fontSize="10" fontWeight="700" fill="#16223f" fontFamily="'Liberation Sans',sans-serif">Z</text><text x="15" y="9" fontSize="9" fontWeight="700" fill="#f2f2f2" fontFamily="'Liberation Sans',sans-serif">Z</text></svg>
  </div>
);

export default function App() {
  return (
    <div className="w-[1920px] h-[1080px] overflow-hidden flex flex-col bg-[#3b3b3b] font-['Noto_Sans',sans-serif]">
      <TabBar />
      <AddressBar />
      <Bookmarks />
      <Toolbar />
      <Viewer />
      <div className="h-[6px] shrink-0" />
      <Taskbar />
    </div>
  );
}
